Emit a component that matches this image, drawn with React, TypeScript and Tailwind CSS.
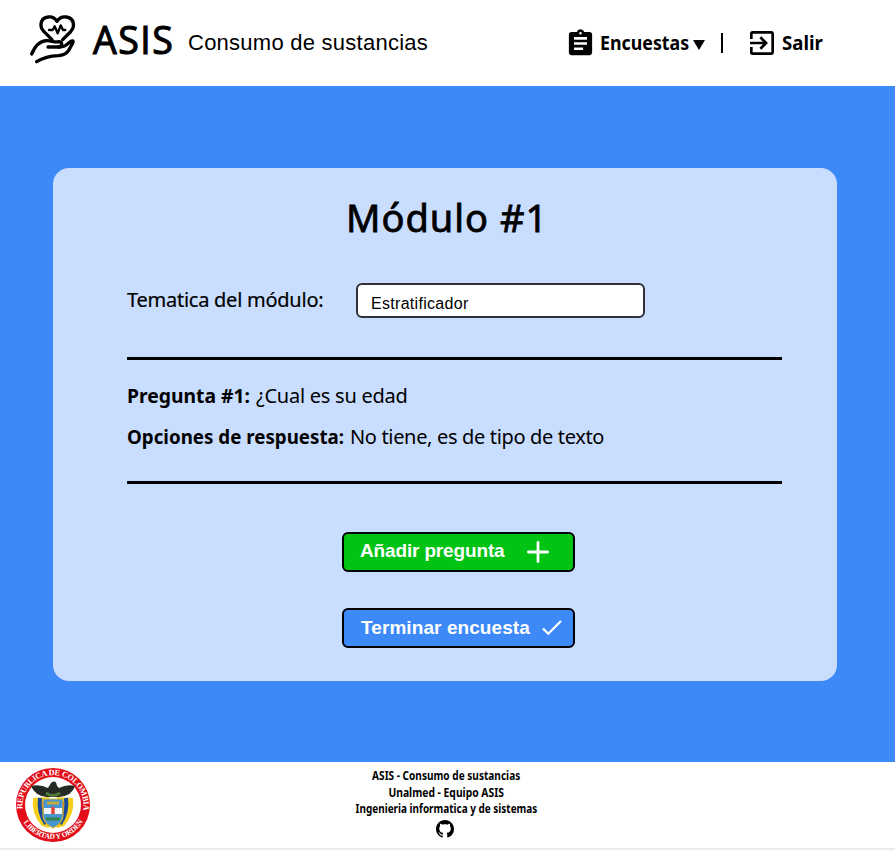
import React from "react";
import { MdAssignment, MdExitToApp } from "react-icons/md";
import { BsGithub } from "react-icons/bs";

const humanist = "font-['Noto_Sans','Open_Sans',sans-serif]";
const openSans = "font-['Open_Sans','Noto_Sans',sans-serif]";
const arial = "font-['Liberation_Sans',Arial,sans-serif]";

function HeartHandLogo() {
  return (
    <svg width="54" height="56" viewBox="0 0 162 168" fill="none" stroke="#000" strokeWidth="10" strokeLinecap="round" strokeLinejoin="round">
      <path d="M78 86 L54 62 C38 45 44 20 66 18 C80 16 88 23 93 31 C98 23 107 16 121 18 C144 21 149 46 133 63 L110 86" />
      <path d="M69 57 H80 L86 46 L95 67 L104 43 L111 57 H118" strokeWidth="7" />
      <path d="M17 129 C27 105 42 90 62 89 C76 88 84 95 98 92 C110 92 110 107 98 108 H66" />
      <path d="M98 108 C113 109 122 102 129 95 C139 86 145 89 139 98 L128 118 C121 129 111 133 97 134 C69 135 53 139 32 152" />
    </svg>
  );
}

function ColombiaSeal() {
  return (
    <svg width="76" height="76" viewBox="0 0 76 76">
      <defs>
        <path id="seal-top" d="M8 44 A30.5 30.5 0 1 1 68 44" />
        <path id="seal-bottom" d="M3.8 42 A34.5 34.5 0 0 0 72.2 42" />
      </defs>
      <circle cx="38" cy="38" r="37" fill="#e20d18" />
      <circle cx="38" cy="38" r="28" fill="#fff" />
      <g fontFamily="'Liberation Serif', serif" fontWeight="700" fontSize="8.2" fill="#fff">
        <text><textPath href="#seal-top" startOffset="2" textLength="104">REPUBLICA DE COLOMBIA</textPath></text>
        <text fontSize="7.6"><textPath href="#seal-bottom" startOffset="14" textLength="72">LIBERTAD Y ORDEN</textPath></text>
      </g>
      <path d="M18 31 Q16 47 27 59 L34 61 V30Z M58 31 Q60 47 49 59 L42 61 V30Z" fill="#f5cf19" />
      <path d="M25 31 Q23 45 31 57 M51 31 Q53 45 45 57" stroke="#174a9c" strokeWidth="4" fill="none" />
      <path d="M28 35 Q28 48 34 58 M48 35 Q48 48 42 58" stroke="#c8202b" strokeWidth="2" fill="none" />
      <path d="M16 19 Q25 17 33 21 L36 16 Q41 12 42 19 L44 21 Q52 17 60 19 Q57 29 44 30 H32 Q20 29 16 19Z" fill="#252a25" />
      <path d="M31 26 Q38 31 45 26" stroke="#4d7a36" strokeWidth="3" fill="none" />
      <path d="M28 32 H48 V49 Q47 57 38 61 Q29 57 28 49Z" fill="#4796cf" stroke="#d8b42c" strokeWidth="1.2" />
      <path d="M29 41 H47 V47 H29Z" fill="#f2f5f7" />
      <path d="M32 36 H44" stroke="#c7ad3b" strokeWidth="3" />
      <path d="M38 40 V47" stroke="#e04435" strokeWidth="3.5" />
      <path d="M31 52 H45" stroke="#35834a" strokeWidth="3" />
    </svg>
  );
}

function Header() {
  return (
    <header className="flex h-[86px] items-start bg-white">
      <div className="mt-[11px] ml-[26px] h-14 w-[54px] shrink-0"><HeartHandLogo /></div>
      <h1 className={`${openSans} mt-[13.5px] ml-[13px] w-[95px] shrink-0 text-[37.5px] leading-[52px] tracking-[1.5px] [-webkit-text-stroke:1.1px_black]`}>ASIS</h1>
      <p className={`${arial} mt-[28px] w-[377px] shrink-0 text-[22px] leading-[30px] tracking-[0.25px]`}>Consumo de sustancias</p>
      <nav className={`${humanist} flex text-[20px] leading-[30px] font-bold`}>
        <MdAssignment size={31} className="mt-[28px] shrink-0" />
        <span className="mt-[28px] ml-[4px] w-[93px] shrink-0 origin-left scale-x-[0.89] whitespace-nowrap">Encuestas</span>
        <span className="mt-[40px] h-[10px] w-3 shrink-0 bg-black [clip-path:polygon(0_0,100%_0,50%_100%)]" />
        <span className="mt-[33px] ml-4 h-5 w-[2px] shrink-0 bg-black" />
        <MdExitToApp size={32} className="mt-[27px] ml-[23px] shrink-0" />
        <span className="mt-[28px] ml-1 origin-left scale-x-[0.93] whitespace-nowrap">Salir</span>
      </nav>
    </header>
  );
}

function Card() {
  return (
    <section className={`${humanist} ml-[53px] h-[513px] w-[784px] rounded-2xl bg-[#c9ddff] pl-[74px]`}>
      <h2 className="ml-[219px] h-[115px] pt-[23px] text-[38px] leading-[52px] tracking-[1px] whitespace-nowrap [-webkit-text-stroke:0.8px_black]">Módulo #1</h2>
      <div className="flex h-[36px]">
        <label htmlFor="topic" className="w-[229px] shrink-0 text-[20px] leading-[34px] tracking-[-0.25px] whitespace-nowrap [-webkit-text-stroke:0.2px_black]">Tematica del módulo:</label>
        <input id="topic" defaultValue="Estratificador" className={`${arial} h-[35px] w-[289px] rounded-md border-2 border-[#303238] bg-white pt-[6px] pl-[13px] text-[16px] tracking-[0.3px]`} />
      </div>
      <hr className="mt-[37.5px] h-[3px] w-[655px] border-0 bg-black" />
      <div className="h-[121px] pt-[19.5px] text-[20px] leading-[34px] whitespace-nowrap">
        <p className="flex h-[41px]"><b className="w-[129px] origin-left scale-x-[0.965]">Pregunta #1:</b><span className="tracking-[-0.25px]">¿Cual es su edad</span></p>
        <p className="flex"><b className="w-[223px] origin-left scale-x-[0.937]">Opciones de respuesta:</b><span className="tracking-[-0.34px]">No tiene, es de tipo de texto</span></p>
      </div>
      <hr className="h-[3px] w-[655px] border-0 bg-black" />
      <div className={`${arial} mt-[48px] ml-[215px] flex flex-col gap-[36.5px] text-[19px] font-bold text-white`}>
        <button className="flex h-10 w-[233px] items-center rounded-md border-2 border-black bg-[#00c314] pl-4">
          <span className="w-[167px] text-left tracking-[-0.15px] whitespace-nowrap">Añadir pregunta</span>
          <svg width="22" height="22" viewBox="0 0 22 22" stroke="#fff" strokeWidth="2.8" strokeLinecap="round"><path d="M11 1.4 V20.6 M1.4 11 H20.6" /></svg>
        </button>
        <button className="flex h-10 w-[233px] items-center rounded-md border-2 border-black bg-[#3d89f7] pl-[17px]">
          <span className="w-[181px] text-left tracking-[0.08px] whitespace-nowrap">Terminar encuesta</span>
          <svg width="20" height="16" viewBox="0 0 20 16" fill="none" stroke="#fff" strokeWidth="2.2"><path d="M1 8.5 L6.3 13.8 L19 1" /></svg>
        </button>
      </div>
    </section>
  );
}

function Footer() {
  return (
    <footer className="flex h-[88px] items-start border-b-2 border-[#ececec] bg-white">
      <div className="mt-[5px] ml-[15px] w-[76px] shrink-0"><ColombiaSeal /></div>
      <div className={`${humanist} ml-[255px] flex w-[200px] flex-col items-center pt-[6px] text-[12px] leading-[16.5px] font-bold whitespace-nowrap`}>
        <p className="scale-x-[0.84]">ASIS - Consumo de sustancias</p>
        <p className="scale-x-[0.86]">Unalmed - Equipo ASIS</p>
        <p className="scale-x-[0.83]">Ingenieria informatica y de sistemas</p>
        <BsGithub size={18} className="mt-[2px] -ml-[2px]" />
      </div>
    </footer>
  );
}

export default function App() {
  return (
    <div className="h-[850px] w-[895px] overflow-hidden bg-white text-black">
      <Header />
      <main className="h-[676px] bg-[#3d89f7] pt-[82px]"><Card /></main>
      <Footer />
    </div>
  );
}
